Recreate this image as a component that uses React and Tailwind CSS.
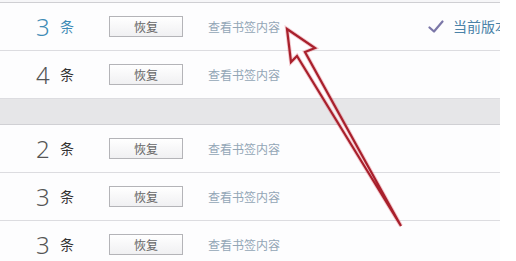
import React from "react";

const rows = [
  { n: "3", current: true },
  { n: "4" },
  null,
  { n: "2" },
  { n: "3" },
  { n: "3" },
];

function Row({ n, current }) {
  return (
    <div className="flex h-[48px] items-center border-b border-[#dcdce0] bg-[#fdfdfe]">
      <span
        className={`ml-[36px] w-[24px] text-[24px] leading-none ${current ? "text-[#3f8bb5]" : "text-[#555]"}`}
        style={{ fontFamily: '"Noto Sans", sans-serif', fontWeight: 300 }}
      >
        {n}
      </span>
      <span className={`text-[14px] ${current ? "text-[#3f8bb5]" : "text-[#333]"}`}>条</span>
      <button className="ml-[35px] flex h-[21px] w-[74px] items-center justify-center border border-[#b4b4b8] bg-gradient-to-b from-white to-[#f0f0f2] text-[12px] text-[#666]">
        恢复
      </button>
      <span className="ml-[25px] text-[12px] text-[#93a6b6]">查看书签内容</span>
      {current && (
        <div className="ml-auto flex w-[72px] items-center overflow-hidden whitespace-nowrap">
          <svg width="16" height="14" viewBox="0 0 16 14" className="shrink-0">
            <path d="M1.5 7.5 L6 11.5 L14.5 1.5" fill="none" stroke="#7b77a8" strokeWidth="2.2" strokeLinecap="round" strokeLinejoin="round" />
          </svg>
          <span className="ml-[9px] text-[14px] text-[#4a82a8]">当前版本</span>
        </div>
      )}
    </div>
  );
}

export default function App() {
  return (
    <div
      className="relative h-[261px] w-[516px] overflow-hidden bg-white"
      style={{ fontFamily: '"Noto Sans CJK SC", "Noto Sans", sans-serif' }}
    >
      <div className="w-[500px] bg-[#f6f6f8] pt-[2px]">
        <div className="border-t border-[#cfcfd3]">
          {rows.map((r, i) =>
            r ? (
              <Row key={i} {...r} />
            ) : (
              <div key={i} className="h-[26px] border-b border-[#d0d0d4] bg-[#e6e6e8]" />
            )
          )}
        </div>
      </div>
      <svg className="pointer-events-none absolute left-0 top-0" width="516" height="261" viewBox="0 0 516 261">
        <path
          d="M287 29 L315 48 L305 52 L401 226 L297 56 L291 62 Z"
          fill="white"
          fillOpacity="0.6"
          stroke="#e06070"
          strokeOpacity="0.35"
          strokeWidth="4"
          strokeLinejoin="miter"
        />
        <path
          d="M287 29 L315 48 L305 52 L401 226 L297 56 L291 62 Z"
          fill="none"
          stroke="#a8202c"
          strokeWidth="2.2"
          strokeLinejoin="miter"
        />
      </svg>
    </div>
  );
}
